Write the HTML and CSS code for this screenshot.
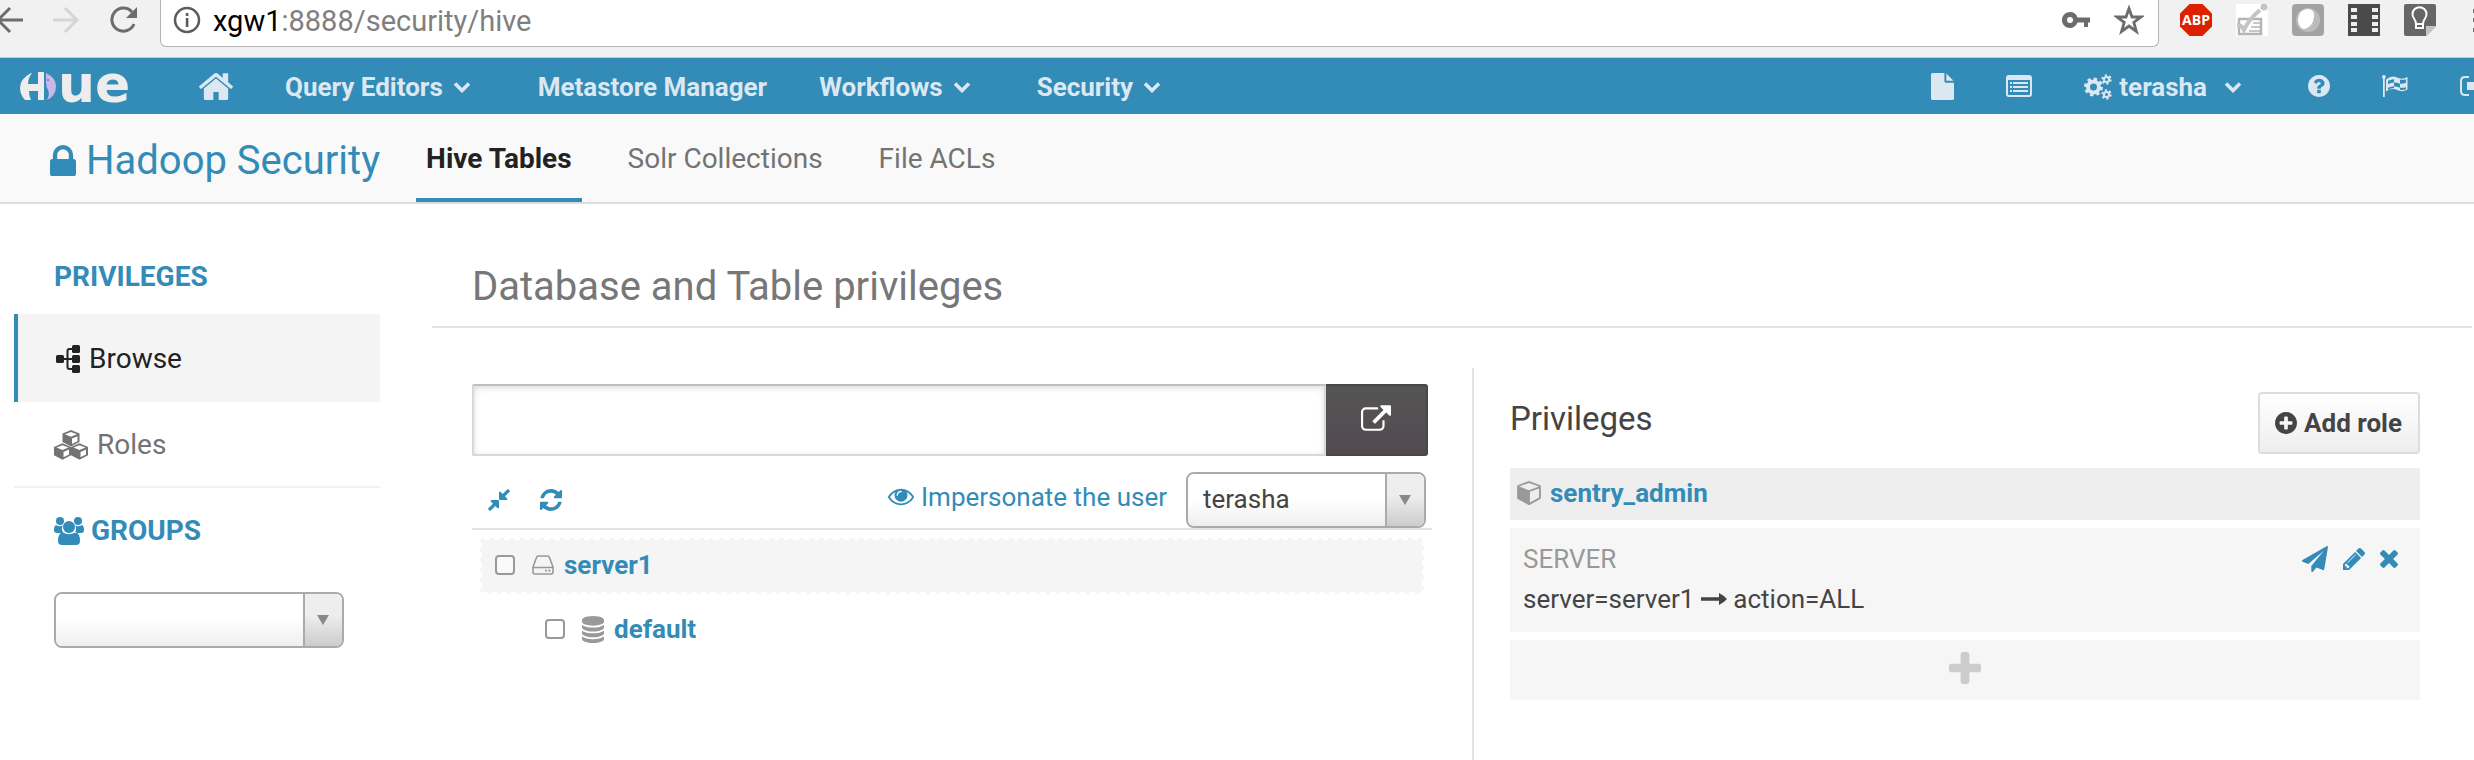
FILE: index.html
```html
<!DOCTYPE html>
<html lang="en">
<head>
<meta charset="utf-8">
<title>Hue - Hadoop Security</title>
<link rel="stylesheet" href="styles.css">
</head>
<body>
<svg class="sprite" aria-hidden="true">
  <symbol id="home" viewBox="90 250 1612 1290" preserveAspectRatio="none"><path d="M1472 992v480q0 26-19 45t-45 19h-384v-384h-256v384h-384q-26 0-45-19t-19-45v-480q0-1 .5-3t.5-3l575-474 575 474q1 2 1 6zm223-69l-62 74q-8 9-21 11h-3q-13 0-21-7l-692-577-692 577q-12 8-24 7-13-2-21-11l-62-74q-8-10-7-23.500t11-21.500l719-599q32-26 76-26t76 26l244 204v-195q0-14 9-23t23-9h192q14 0 23 9t9 23v408l219 182q10 8 11 21.500t-7 23.500z"/></symbol>
  <symbol id="lock" viewBox="320 128 1152 1408" preserveAspectRatio="none"><path d="M640 768h512v-192q0-106-75-181t-181-75-181 75-75 181v192zm832 96v576q0 40-28 68t-68 28h-960q-40 0-68-28t-28-68v-576q0-40 28-68t68-28h32v-192q0-184 132-316t316-132 316 132 132 316v192h32q40 0 68 28t28 68z"/></symbol>
  <symbol id="refresh" viewBox="128 128 1536 1536"><path d="M1639 1056q0 5-1 7-64 268-268 434.500t-478 166.500q-146 0-282.500-55t-243.500-157l-129 129q-19 19-45 19t-45-19-19-45v-448q0-26 19-45t45-19h448q26 0 45 19t19 45-19 45l-137 137q71 66 161 102t187 36q134 0 250-65t186-179q11-17 53-117 8-23 30-23h192q13 0 22.500 9.500t9.500 22.500zm25-800v448q0 26-19 45t-45 19h-448q-26 0-45-19t-19-45 19-45l138-138q-148-137-349-137-134 0-250 65t-186 179q-11 17-53 117-8 23-30 23h-199q-13 0-22.500-9.500t-9.500-22.500v-7q65-268 270-434.500t480-166.500q146 0 284 55.500t245 156.500l130-129q19-19 45-19t45 19 19 45z"/></symbol>
  <symbol id="compress" viewBox="141 141 1510 1510"><path d="M896 960v448q0 26-19 45t-45 19-45-19l-144-144-332 332q-10 10-23 10t-23-10l-114-114q-10-10-10-23t10-23l332-332-144-144q-19-19-19-45t19-45 45-19h448q26 0 45 19t19 45zm755-672q0 13-10 23l-332 332 144 144q19 19 19 45t-19 45-45 19h-448q-26 0-45-19t-19-45v-448q0-26 19-45t45-19 45 19l144 144 332-332q10-10 23-10t23 10l114 114q10 10 10 23z"/></symbol>
  <symbol id="eye" viewBox="0 384 1792 1152"><path d="M1664 960q-152-236-381-353 61 104 61 225 0 185-131.500 316.500t-316.500 131.500-316.500-131.500-131.500-316.500q0-121 61-225-229 117-381 353 133 205 333.500 326.500t434.500 121.500 434.500-121.500 333.500-326.500zm-720-384q0-20-14-34t-34-14q-125 0-214.500 89.500t-89.500 214.500q0 20 14 34t34 14 34-14 14-34q0-86 61-147t147-61q20 0 34-14t14-34zm848 384q0 34-20 69-140 230-376.500 368.500t-499.500 138.500-499.500-139-376.500-368q-20-35-20-69t20-69q140-229 376.500-368t499.500-139 499.500 139 376.500 368q20 35 20 69z"/></symbol>
  <symbol id="external" viewBox="0 0 1792 1536"><path d="M1408 928v320q0 119-84.500 203.500t-203.500 84.500h-832q-119 0-203.500-84.500t-84.500-203.500v-832q0-119 84.500-203.500t203.500-84.500h704q14 0 23 9t9 23v64q0 14-9 23t-23 9h-704q-66 0-113 47t-47 113v832q0 66 47 113t113 47h832q66 0 113-47t47-113v-320q0-14 9-23t23-9h64q14 0 23 9t9 23zm384-864v512q0 26-19 45t-45 19-45-19l-176-176-652 652q-10 10-23 10t-23-10l-114-114q-10-10-10-23t10-23l652-652-176-176q-19-19-19-45t19-45 45-19h512q26 0 45 19t19 45z"/></symbol>
  <symbol id="hdd" viewBox="0 0 22 20"><path d="M1 12 4.500 2.500Q5 1 6.500 1h9q1.500 0 2 1.500L21 12M1 12.500h20V17q0 2-2 2H3q-2 0-2-2z" fill="none" stroke="currentColor" stroke-width="1.600"/><circle cx="14" cy="15.700" r="1.100"/><circle cx="17.400" cy="15.700" r="1.100"/></symbol>
  <symbol id="database" viewBox="128 0 1536 1792" preserveAspectRatio="none"><path d="M896 768q237 0 443-43t325-127v170q0 69-103 128t-280 93.500-385 34.500-385-34.500-280-93.500-103-128v-170q119 84 325 127t443 43zm0 768q237 0 443-43t325-127v170q0 69-103 128t-280 93.500-385 34.500-385-34.500-280-93.500-103-128v-170q119 84 325 127t443 43zm0-384q237 0 443-43t325-127v170q0 69-103 128t-280 93.500-385 34.500-385-34.500-280-93.500-103-128v-170q119 84 325 127t443 43zm0-1152q208 0 385 34.500t280 93.500 103 128v128q0 69-103 128t-280 93.500-385 34.500-385-34.500-280-93.500-103-128v-128q0-69 103-128t280-93.500 385-34.500z"/></symbol>
  <symbol id="cube" viewBox="0 120 1664 1680"><path d="M896 1629l640-349v-636l-640 233v752zm-64-865l698-254-698-254-698 254zm832-252v768q0 35-18 65t-49 47l-704 384q-28 16-61 16t-61-16l-704-384q-31-17-49-47t-18-65v-768q0-40 23-73t61-47l704-256q22-8 44-8t44 8l704 256q38 14 61 47t23 73z"/></symbol>
  <symbol id="cubes" viewBox="0 0 34 30"><g fill-rule="evenodd"><path id="small-cube" d="M17 0l8.500 3.600V12L17 16.500 8.500 12V3.600zM11 4.300l6 2.400 6-2.400-6-2.400zM18 14l5.500-2.800V6.300L18 8.600z"/><use href="#small-cube" x="-8.500" y="13.300"/><use href="#small-cube" x="8.500" y="13.300"/></g></symbol>
  <symbol id="tree" viewBox="0 0 24 28"><rect y="10" width="8" height="8" rx="1.500"/><rect x="16" width="8" height="8" rx="1.500"/><rect x="16" y="10" width="8" height="8" rx="1.500"/><rect x="16" y="20" width="8" height="8" rx="1.500"/><path d="M8 14h8M16 4h-2.500q-2 0-2 2v16q0 2 2 2H16" fill="none" stroke="currentColor" stroke-width="2"/></symbol>
  <symbol id="group" viewBox="0 0 30 28"><circle cx="6" cy="4" r="4"/><circle cx="24" cy="4" r="4"/><circle cx="15" cy="10" r="6"/><path d="M2 8q4 2.500 7 0-2.500 4 .5 8H3q-3 0-3-3 0-4 2-5zM28 8q-4 2.500-7 0 2.500 4-.5 8H27q3 0 3-3 0-4-2-5zM8.500 15q6.500 4.500 13 0Q26 16.500 26 24q0 4-4 4H8q-4 0-4-4 0-7.500 4.500-9z"/></symbol>
  <symbol id="plus-circle" viewBox="128 128 1536 1536"><path d="M1344 960v-128q0-26-19-45t-45-19h-256v-256q0-26-19-45t-45-19h-128q-26 0-45 19t-19 45v256h-256q-26 0-45 19t-19 45v128q0 26 19 45t45 19h256v256q0 26 19 45t45 19h128q26 0 45-19t19-45v-256h256q26 0 45-19t19-45zm320-64q0 209-103 385.500t-279.500 279.500-385.500 103-385.500-103-279.500-279.500-103-385.500 103-385.500 279.500-279.500 385.500-103 385.500 103 279.500 279.500 103 385.500z"/></symbol>
  <symbol id="question" viewBox="128 128 1536 1536"><path d="M1024 1376v-192q0-14-9-23t-23-9h-192q-14 0-23 9t-9 23v192q0 14 9 23t23 9h192q14 0 23-9t9-23zm256-672q0-88-55.500-163t-138.500-116-170-41q-243 0-371 213-15 24 8 42l132 100q7 6 19 6 16 0 25-12 53-68 86-92 34-24 86-24 48 0 85.500 26t37.500 59q0 38-20 61t-68 45q-63 28-115.500 86.500t-52.500 125.500v36q0 14 9 23t23 9h192q14 0 23-9t9-23q0-19 21.500-49.500t54.500-49.500q32-18 49-28.500t46-35 44.500-48 28-60.500 12.500-81zm384 192q0 209-103 385.500t-279.500 279.500-385.500 103-385.500-103-279.500-279.500-103-385.500 103-385.500 279.500-279.500 385.500-103 385.500 103 279.500 279.500 103 385.500z"/></symbol>
  <symbol id="times" viewBox="302 366 1188 1188"><path d="M1490 1322q0 40-28 68l-136 136q-28 28-68 28t-68-28l-294-294-294 294q-28 28-68 28t-68-28l-136-136q-28-28-28-68t28-68l294-294-294-294q-28-28-28-68t28-68l136-136q28-28 68-28t68 28l294 294 294-294q28-28 68-28t68 28l136 136q28 28 28 68t-28 68l-294 294 294 294q28 28 28 68z"/></symbol>
  <symbol id="plus" viewBox="192 128 1408 1408"><path d="M1600 736v192q0 40-28 68t-68 28h-416v416q0 40-28 68t-68 28h-192q-40 0-68-28t-28-68v-416h-416q-40 0-68-28t-28-68v-192q0-40 28-68t68-28h416v-416q0-40 28-68t68-28h192q40 0 68 28t28 68v416h416q40 0 68 28t28 68z"/></symbol>
  <symbol id="pencil" viewBox="128 149 1515 1515"><path d="M491 1536l91-91-235-235-91 91v107h128v128h107zm523-928q0-22-22-22-10 0-17 7l-542 542q-7 7-7 17 0 22 22 22 10 0 17-7l542-542q7-7 7-17zm-54-192l416 416-832 832h-416v-416zm683 96q0 53-37 90l-166 166-416-416 166-165q36-38 90-38 53 0 91 38l235 234q37 39 37 91z"/></symbol>
  <symbol id="plane" viewBox="0 0 1792 1792"><path d="M1764 11q33 24 27 64l-256 1536q-5 29-32 45-14 8-31 8-11 0-24-5l-453-185-242 295q-18 23-49 23-13 0-22-4-19-7-30.500-23.500t-11.500-36.500v-349l864-1059-1069 925-395-162q-37-14-40-55-2-40 32-59l1664-960q15-9 32-9 20 0 36 11z"/></symbol>
  <symbol id="file" viewBox="128 0 1536 1792" preserveAspectRatio="none"><path d="M1152 512v-472q22 14 36 28l408 408q14 14 28 36h-472zm-128 32q0 40 28 68t68 28h544v1056q0 40-28 68t-68 28h-1344q-40 0-68-28t-28-68v-1600q0-40 28-68t68-28h800v544z"/></symbol>
  <symbol id="list" viewBox="0 0 26 22"><rect x="1" y="1" width="24" height="20" rx="2" fill="none" stroke="currentColor" stroke-width="2"/><path d="M1 1h24v4H1zM4 7h2v2H4zM4 11h2v2H4zM4 15h2v2H4zM7 7h15v2H7zM7 11h15v2H7zM7 15h15v2H7z"/></symbol>
  <symbol id="cogs" viewBox="0 0 28 26"><g fill="none" stroke="currentColor"><circle cx="9.500" cy="13" r="5.500" stroke-width="4"/><circle cx="9.500" cy="13" r="8" stroke-width="3" stroke-dasharray="3.280 3.003"/><circle cx="22.500" cy="5.500" r="2.600" stroke-width="2"/><circle cx="22.500" cy="5.500" r="4.200" stroke-width="2" stroke-dasharray="2.200 2.198"/><circle cx="22.500" cy="20.500" r="2.600" stroke-width="2"/><circle cx="22.500" cy="20.500" r="4.200" stroke-width="2" stroke-dasharray="2.200 2.198"/></g></symbol>
  <symbol id="flag" viewBox="0 0 26 22"><circle cx="1.900" cy="1.900" r="1.900"/><path d="M1 2h1.800v20H1zM4 4.500Q10 0 15 2.500t10.500-.5v12.500q-5 3-10.500.5T4 16.500zM6 5.800v3.400q3-1.600 6-1.700V4.200q-3 0-6 1.600zM12 7.500v3.700q3 0 6 1.500V8.700q-3-1.200-6-1.200zM18 4.700v4q3 .3 6-.9V4.200q-3 1-6 .5zM6 12.700v2q3-1.600 6-1.600v-1.900q-3 0-6 1.500zM18 12.700v2q3 .8 6-.5v-2q-3 1-6 .5z" fill-rule="evenodd"/></symbol>
  <symbol id="signout" viewBox="0 0 26 20"><path d="M9 1H5Q1 1 1 5v10q0 4 4 4h4" fill="none" stroke="currentColor" stroke-width="2"/><path d="M7 6h8V1l10 9-10 9v-5H7z"/></symbol>
  <symbol id="chevron" viewBox="0 0 18 12"><path d="M2 2.500l7 7 7-7" fill="none" stroke="currentColor" stroke-width="3.600"/></symbol>
  <symbol id="arrow" viewBox="0 0 26 12"><path d="M0 4.300h18V0q5 2.500 8 6-3 3.500-8 6V7.700H0z"/></symbol>
</svg>

<header class="browser">
  <div class="browser-nav">
    <button class="bare" aria-label="Back"><svg width="24" height="28" viewBox="0 0 24 28"><path d="M23 14H0M10 2-2 14l12 12" fill="none" stroke="#6c6c6c" stroke-width="3"/></svg></button>
    <button class="bare" aria-label="Forward"><svg width="28" height="28" viewBox="0 0 28 28"><path d="M0 14h25M12 2l12 12-12 12" fill="none" stroke="#d6d6d6" stroke-width="3"/></svg></button>
    <button class="bare" aria-label="Reload"><svg width="28" height="28" viewBox="0 0 28 28"><path d="M24 18A11.500 11.500 0 1 1 22 6" fill="none" stroke="#6c6c6c" stroke-width="3"/><path d="M27 1v11H16z" fill="#6c6c6c"/></svg></button>
  </div>
  <div class="address">
    <svg width="28" height="28" viewBox="0 0 28 28"><circle cx="14" cy="14" r="12" fill="none" stroke="#5c5c5c" stroke-width="2.500"/><path d="M12.800 7h2.600v3h-2.600zM12.800 12h2.600v9h-2.600z" fill="#5c5c5c"/></svg>
    <span class="url"><b>xgw1</b>:8888/security/hive</span>
    <svg width="28" height="16" viewBox="0 0 28 16"><path d="M8 0a8 8 0 1 0 7.500 10.500H22V15h4v-4.500h2v-5H15.500A8 8 0 0 0 8 0zm0 5a3 3 0 1 1 0 6 3 3 0 0 1 0-6z" fill="#6c6c6c" fill-rule="evenodd"/></svg>
    <svg class="star" width="30" height="30" viewBox="0 0 30 30"><path d="M15 3.500l3 8.500h9l-7.200 5.400 2.600 9L15 21l-7.400 5.400 2.600-9L3 12h9z" fill="none" stroke="#6c6c6c" stroke-width="2.800"/></svg>
  </div>
  <div class="extensions">
    <svg width="32" height="32" viewBox="0 0 32 32"><path d="M9.500 0h13L32 9.500v13L22.500 32h-13L0 22.500v-13z" fill="#dd2000"/><text class="abp" x="16" y="21" text-anchor="middle">ABP</text></svg>
    <svg width="32" height="32" viewBox="0 0 32 32"><path d="M0 0h32v32H0z" fill="#fff"/><path d="M3 15h22v15H3z" fill="none" stroke="#b4b4b4" stroke-width="2.500"/><path d="M17 19h7M15 23h9M13 27h11" stroke="#b4b4b4" stroke-width="1.500"/><path d="M1 21q5 0 7 5 5-11 16-20" fill="none" stroke="#c4c4c4" stroke-width="4"/><circle cx="28" cy="3" r="3.500" fill="#c4c4c4"/></svg>
    <svg width="32" height="32" viewBox="0 0 32 32"><rect width="32" height="32" rx="4" fill="#a2a2a2"/><circle cx="16" cy="16" r="12" fill="#bcbcbc"/><path d="M6 17Q6 5 17 5q6 1 5 8-1 10-10 12-5-1-6-8z" fill="#fff"/></svg>
    <svg width="32" height="32" viewBox="0 0 32 32"><path d="M0 0h32v32H0z" fill="#4a4a4a"/><path d="M3 4h6v4H3zM3 11h6v4H3zM3 18h6v4H3zM3 24h6v4H3zM24 4h6v4h-6zM24 11h6v4h-6zM24 18h6v4h-6zM24 24h6v4h-6z" fill="#eee"/></svg>
    <svg width="32" height="32" viewBox="0 0 32 32"><path d="M2 0h28q2 0 2 2v20L22 32H2q-2 0-2-2V2q0-2 2-2z" fill="#666"/><path d="M22 32V22h10z" fill="#c4c4c4"/><path d="M12 20q0-3-2-5.500a7 7 0 1 1 11 0Q19 17 19 20zM12 21v3h7v-3" fill="none" stroke="#fff" stroke-width="2"/></svg>
    <svg class="menu-dots" width="2" height="32" viewBox="0 0 2 32"><path d="M1 5h3v4H1zM1 14h3v4H1zM1 24h3v4H1z" fill="#6c6c6c"/></svg>
  </div>
</header>

<nav class="navbar">
  <a class="logo" href="#" aria-label="Hue"><svg width="36" height="28" viewBox="0 0 36 28"><path d="M11 1Q0 7 0 15.500 0 23 5 28h6q-2-4-2-9h9v9h6V0h-6v12H8q0-6 4-11z" fill="#ededed"/><path d="M26 1q10 5 10 13 0 10-9 14 3-6 1-10-2-3-2-8z" fill="#c9b6ea"/><circle cx="28" cy="8" r="1" fill="#7a6a9c"/></svg><span class="wordmark">ue</span></a>
  <a class="home" href="#" aria-label="Home"><svg class="i-home"><use href="#home"/></svg></a>
  <a class="item query" href="#">Query Editors <svg class="i-chev"><use href="#chevron"/></svg></a>
  <a class="item meta" href="#">Metastore Manager</a>
  <a class="item work" href="#">Workflows <svg class="i-chev"><use href="#chevron"/></svg></a>
  <a class="item" href="#">Security <svg class="i-chev"><use href="#chevron"/></svg></a>
  <div class="tools">
    <a href="#" aria-label="Documents"><svg class="i-file"><use href="#file"/></svg></a>
    <a href="#" aria-label="Jobs"><svg class="i-list"><use href="#list"/></svg></a>
    <a class="user" href="#"><svg class="i-cogs"><use href="#cogs"/></svg> terasha <svg class="i-chev"><use href="#chevron"/></svg></a>
    <a href="#" aria-label="Help"><svg class="i-help"><use href="#question"/></svg></a>
    <a href="#" aria-label="Tour"><svg class="i-list"><use href="#flag"/></svg></a>
    <a class="signout" href="#" aria-label="Sign out"><svg class="i-out"><use href="#signout"/></svg></a>
  </div>
</nav>

<div class="subnav">
  <a class="app" href="#"><svg class="i-lock"><use href="#lock"/></svg>Hadoop Security</a>
  <a class="tab active" href="#">Hive Tables</a>
  <a class="tab" href="#">Solr Collections</a>
  <a class="tab" href="#">File ACLs</a>
</div>

<div class="page">
  <aside class="sidebar">
    <h2 class="side-title">Privileges</h2>
    <a class="side-link current" href="#"><svg class="i-tree"><use href="#tree"/></svg>Browse</a>
    <a class="side-link roles-link" href="#"><svg class="i-cubes"><use href="#cubes"/></svg>Roles</a>
    <h2 class="side-title groups"><svg class="i-group"><use href="#group"/></svg>Groups</h2>
    <div class="combo group-combo"><select aria-label="Groups"><option></option></select></div>
  </aside>

  <main class="main">
    <h1 class="title">Database and Table privileges</h1>
    <div class="columns">
      <section class="browse">
        <div class="path">
          <input type="text" aria-label="Path">
          <button class="open" aria-label="Open"><svg class="i-ext"><use href="#external"/></svg></button>
        </div>
        <div class="toolbar">
          <button class="bare" aria-label="Collapse"><svg class="i-22"><use href="#compress"/></svg></button>
          <button class="bare" aria-label="Refresh"><svg class="i-22"><use href="#refresh"/></svg></button>
          <label class="impersonate" for="user"><svg class="i-eye"><use href="#eye"/></svg>Impersonate the user</label>
          <div class="combo user-combo"><select id="user"><option>terasha</option></select></div>
        </div>
        <div class="node selected">
          <input type="checkbox" aria-label="Select server1">
          <svg class="i-hdd"><use href="#hdd"/></svg>
          <a href="#">server1</a>
        </div>
        <div class="node child">
          <input type="checkbox" aria-label="Select default">
          <svg class="i-db"><use href="#database"/></svg>
          <a href="#">default</a>
        </div>
      </section>

      <section class="roles">
        <div class="roles-head">
          <h3>Privileges</h3>
          <button class="add-role"><svg class="i-22"><use href="#plus-circle"/></svg>Add role</button>
        </div>
        <div class="role"><svg class="i-cube"><use href="#cube"/></svg><a href="#">sentry_admin</a></div>
        <div class="privilege">
          <div>
            <div class="kind">SERVER</div>
            <div>server=server1 <svg class="i-arrow"><use href="#arrow"/></svg> action=ALL</div>
          </div>
          <div class="actions">
            <button class="bare" aria-label="Share"><svg class="i-plane"><use href="#plane"/></svg></button>
            <button class="bare" aria-label="Edit"><svg class="i-22"><use href="#pencil"/></svg></button>
            <button class="bare" aria-label="Delete"><svg class="i-times"><use href="#times"/></svg></button>
          </div>
        </div>
        <button class="add-privilege" aria-label="Add privilege"><svg class="i-plus"><use href="#plus"/></svg></button>
      </section>
    </div>
  </main>
</div>
</body>
</html>
```
FILE: styles.css
```css
* { box-sizing: border-box; }

body {
  margin: 0;
  min-height: 100vh;
  display: flex;
  flex-direction: column;
  overflow: hidden;
  background: #fff;
  color: #444;
  font: 26px/40px Roboto, "Liberation Sans", sans-serif;
}

a { color: #338bb8; text-decoration: none; }
h1, h2, h3 { margin: 0; font-weight: 400; }
svg { flex: none; fill: currentColor; }
button, input, select { font: inherit; color: inherit; margin: 0; }
.sprite { position: absolute; width: 0; height: 0; }
.bare { display: flex; padding: 0; border: 0; background: none; color: #338bb8; }

/* icon sizes */
.i-home { width: 34px; height: 27px; }
.i-chev { width: 18px; height: 12px; }
.i-file { width: 23px; height: 27px; }
.i-list { width: 26px; height: 22px; }
.i-cogs { width: 28px; height: 26px; }
.i-help, .i-22 { width: 22px; height: 22px; }
.i-out { width: 26px; height: 20px; }
.i-lock { width: 26px; height: 31px; }
.i-tree { width: 24px; height: 28px; }
.i-cubes { width: 34px; height: 30px; }
.i-group { width: 30px; height: 28px; }
.i-ext { width: 30px; height: 26px; }
.i-eye { width: 26px; height: 18px; }
.i-hdd { width: 22px; height: 20px; color: #999; }
.i-db { width: 22px; height: 27px; color: #999; }
.i-cube { width: 24px; height: 24px; color: #999; }
.i-arrow { width: 26px; height: 12px; vertical-align: 3px; }
.i-plane { width: 26px; height: 26px; }
.i-times { width: 18px; height: 18px; }
.i-plus { width: 32px; height: 32px; }

/* browser bar */
.browser {
  height: 58px;
  display: flex;
  background: #f1f1f1;
  border-bottom: 1px solid #c8c8c8;
}
.browser-nav { width: 160px; padding-top: 6px; display: flex; align-items: flex-start; gap: 29px; }
.address {
  flex: 1;
  height: 47px;
  padding: 0 14px 6px 12px;
  display: flex;
  align-items: center;
  background: #fff;
  border: 1px solid #b4b4b4;
  border-top: 0;
  border-radius: 0 0 6px 6px;
}
.url { flex: 1; padding: 2px 0 0 12px; font-size: 29px; color: #7f7f7f; }
.url b { color: #000; font-weight: 400; }
.star { margin-left: 24px; }
.extensions { padding: 4px 0 0 21px; display: flex; gap: 24px; }
.menu-dots { margin-left: 12px; }
.abp { font: bold 14px "Open Sans", sans-serif; fill: #fff; }

/* navigation */
.navbar {
  height: 56px;
  display: flex;
  align-items: center;
  background: #338bb8;
  font-weight: 700;
  white-space: nowrap;
}
.navbar a { color: #dbe8f1; display: flex; align-items: center; }
.navbar .item, .navbar .user { padding-top: 2px; }
.logo { width: 110px; margin: 0 69px 0 20px; gap: 2px; }
.logo .wordmark { color: #ededed; font: bold 52px/52px "DejaVu Sans", sans-serif; padding-bottom: 4px; }
.home { margin-right: 52px; }
.item { gap: 10px; }
.query { margin-right: 67px; }
.meta { margin-right: 52px; }
.work { margin-right: 66px; }
.tools { margin-left: auto; display: flex; align-items: center; gap: 52px; }
.tools .user { gap: 7px; margin-right: 14px; }
.tools .user .i-chev { margin-left: 10px; }
.signout { width: 14px; overflow: hidden; }

.subnav {
  height: 90px;
  padding-left: 50px;
  display: flex;
  background: #f9f9f9;
  border-bottom: 2px solid #dcdcdc;
  font-size: 28px;
  line-height: 78px;
}
.app { display: flex; align-items: center; gap: 10px; padding-top: 5px; margin-right: 36px; font-size: 40px; }
.tab { padding: 6px 10px 0; margin-right: 36px; color: #737373; border-bottom: 4px solid transparent; }
.tab.active { color: #222; font-weight: 700; border-color: #338bb8; }

/* page */
.page { flex: 1; display: flex; }
.sidebar { width: 366px; margin: 36px 52px 0 14px; font-size: 28px; }
.side-title {
  padding-left: 40px;
  color: #338bb8;
  font-size: 28px;
  font-weight: 700;
  line-height: 74px;
  text-transform: uppercase;
}
.side-link { height: 88px; padding: 2px 0 0 40px; display: flex; align-items: center; gap: 9px; color: #737373; }
.side-link.current { padding-left: 38px; background: #f4f4f4; color: #222; border-left: 4px solid #338bb8; }
.roles-link { height: 86px; border-bottom: 2px solid #f1f1f1; }
.groups { display: flex; align-items: center; gap: 7px; line-height: 86px; }

.combo {
  position: relative;
  height: 56px;
  border: 2px solid #aaa;
  border-radius: 8px;
  overflow: hidden;
}
.combo select {
  appearance: none;
  display: block;
  width: 100%;
  height: 100%;
  padding: 0 44px 2px 15px;
  border: 0;
  background: linear-gradient(#fff 50%, #eee);
}
.combo::after {
  content: "";
  position: absolute;
  top: 0;
  right: 0;
  width: 37px;
  height: 100%;
  border-left: 2px solid #aaa;
  background: linear-gradient(#eee 40%, #ccc);
  pointer-events: none;
}
.combo::before {
  content: "";
  position: absolute;
  z-index: 1;
  top: 21px;
  right: 13px;
  border: 6px solid transparent;
  border-top: 10px solid #888;
  border-bottom: 0;
  pointer-events: none;
}
.group-combo { width: 290px; margin: 18px 0 0 40px; }
.user-combo { width: 240px; }

.main { flex: 1; margin: 42px 2px 0 0; display: flex; flex-direction: column; }
.title { padding: 2px 0 0 40px; font-size: 40px; line-height: 78px; color: #777; border-bottom: 2px solid #e4e4e4; }
.columns { flex: 1; margin: 40px 0 0 40px; display: grid; grid-template-columns: 1fr 1fr; }

.browse { padding: 16px 40px 0 0; }
.path { height: 72px; margin-right: 4px; display: flex; }
.path input {
  flex: 1;
  border: 2px solid #d8d8d8;
  border-top-color: #bfbfbf;
  border-radius: 2px 0 0 2px;
  box-shadow: inset 0 2px 6px #ddd;
}
.open {
  width: 102px;
  display: flex;
  align-items: center;
  justify-content: center;
  padding-bottom: 6px;
  border: 2px solid #484648;
  border-left: 0;
  border-radius: 0 3px 3px 0;
  background: linear-gradient(#555, #524a50);
  color: #fff;
}
.toolbar { padding: 16px 6px 0 16px; display: flex; align-items: center; gap: 30px; border-bottom: 2px solid #e4e4e4; }
.impersonate { margin: 0 -11px 6px auto; display: flex; align-items: center; gap: 7px; color: #338bb8; }

.node {
  height: 56px;
  margin: 8px 8px 0;
  padding: 0 0 2px 13px;
  display: flex;
  align-items: center;
  border: 2px solid transparent;
  border-radius: 4px;
}
.node.selected { background: #f5f5f5; border: 2px dashed #fff; }
.node.child { padding-left: 63px; }
.node a { margin-left: 10px; font-weight: 700; }
.node input {
  appearance: none;
  width: 20px;
  height: 20px;
  margin-right: 17px;
  border: 2px solid #999;
  border-radius: 4px;
  background: #fff;
}
.node.selected input { background: #f9f9f9; }

.roles { padding: 24px 52px 0 36px; border-left: 2px solid #e2e2e2; }
.roles-head { margin-bottom: 14px; display: flex; justify-content: space-between; }
.roles-head h3 { font-size: 33px; line-height: 54px; }
.add-role {
  height: 62px;
  padding: 0 16px 0 15px;
  display: flex;
  align-items: center;
  gap: 7px;
  border: 2px solid #ddd;
  border-radius: 4px;
  background: linear-gradient(#fff, #eee);
  font-weight: 700;
}
.role { height: 52px; padding: 0 0 2px 7px; display: flex; align-items: center; gap: 9px; background: #eee; font-weight: 700; }
.privilege { margin: 8px 0; padding: 11px 12px 13px 13px; display: flex; justify-content: space-between; background: #f6f6f6; }
.kind { color: #999; }
.actions { height: 40px; padding-right: 10px; display: flex; align-items: center; gap: 15px; }
.add-privilege {
  width: 100%;
  height: 60px;
  padding: 0 0 4px;
  display: flex;
  align-items: center;
  justify-content: center;
  border: 0;
  background: #f6f6f6;
  color: #ccc;
}
```
